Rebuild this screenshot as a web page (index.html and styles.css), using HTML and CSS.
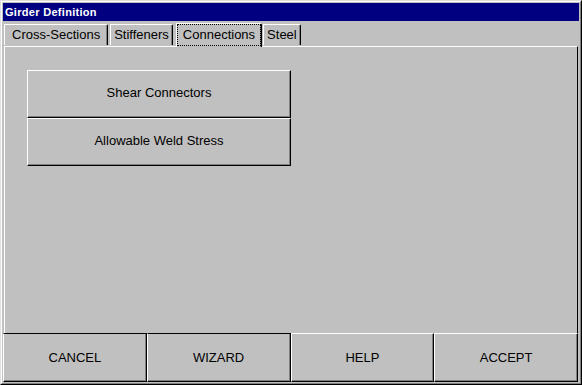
FILE: index.html
```html
<!DOCTYPE html>
<html>
<head>
<meta charset="utf-8">
<link rel="stylesheet" href="styles.css">
</head>
<body>
<div class="window">
  <div class="window-inner">
    <div class="titlebar">Girder Definition</div>
    <div class="tabs">
      <div class="tab tab-first">Cross-Sections</div>
      <div class="tab tab-narrow">Stiffeners</div>
      <div class="tab tab-active"><span class="focus">Connections</span></div>
      <div class="tab tab-narrow">Steel</div>
    </div>
    <div class="panel">
      <div class="stack">
        <div class="btn">Shear Connectors</div>
        <div class="btn">Allowable Weld Stress</div>
      </div>
    </div>
    <div class="footer">
      <div class="fbtn fbtn-dark">CANCEL</div>
      <div class="fbtn fbtn-dark">WIZARD</div>
      <div class="fbtn">HELP</div>
      <div class="fbtn">ACCEPT</div>
    </div>
  </div>
</div>
</body>
</html>
```
FILE: styles.css
```css
html, body {
  margin: 0;
  padding: 0;
  background: #c0c0c0;
}
body {
  font-family: "Liberation Sans", Arial, sans-serif;
  font-size: 13px;
  color: #000;
}
.window {
  width: 582px;
  height: 385px;
  box-sizing: border-box;
  border: 1px solid;
  border-color: #dfdfdf #000 #000 #dfdfdf;
  background: #c0c0c0;
}
.window-inner {
  height: 100%;
  box-sizing: border-box;
  border: 1px solid;
  border-color: #fff #808080 #808080 #fff;
  padding: 1px;
  display: flex;
  flex-direction: column;
}
.titlebar {
  height: 18px;
  line-height: 18px;
  background: #000080;
  color: #fff;
  font-weight: bold;
  font-size: 11px;
  letter-spacing: 0.3px;
  padding-left: 2px;
  flex: none;
}
.tabs {
  height: 25px;
  flex: none;
  display: flex;
  align-items: flex-end;
  gap: 2px;
  position: relative;
  z-index: 1;
}
.tab {
  height: 21px;
  line-height: 19px;
  box-sizing: border-box;
  border-top: 1px solid #fff;
  border-left: 1px solid #fff;
  border-right: 1px solid #000;
  box-shadow: inset -1px 0 #808080;
  border-top-right-radius: 2px;
  padding: 0 6px;
  margin-bottom: 1px;
}
.tab-first {
  margin-left: 1px;
  padding: 0 7px;
}
.tab-narrow {
  padding: 0 3px;
}
.tab-active {
  height: 24px;
  margin-bottom: -1px;
  margin-left: 1px;
  margin-right: -1px;
  background: #c0c0c0;
  padding: 1px 1px 2px 1px;
  line-height: 19px;
}
.focus {
  display: block;
  outline: 1px dotted #000;
  padding: 0 5px;
  height: 20px;
}
.panel {
  flex: 1;
  margin: 0 1px;
  border-top: 1px solid #fff;
  border-left: 1px solid #fff;
  border-right: 1px solid #000;
  padding: 23px 0 0 22px;
}
.stack {
  width: 264px;
  display: flex;
  flex-direction: column;
}
.btn {
  height: 48px;
  box-sizing: border-box;
  border: 1px solid;
  border-color: #fff #000 #000 #fff;
  box-shadow: inset -1px -1px #808080;
  display: flex;
  align-items: center;
  justify-content: center;
  padding-bottom: 3px;
}
.footer {
  height: 49px;
  flex: none;
  display: flex;
  margin-right: 1px;
}
.fbtn {
  flex: 1;
  box-sizing: border-box;
  border: 1px solid;
  border-color: #fff #000 #000 #fff;
  box-shadow: inset -1px -1px #808080;
  display: flex;
  align-items: center;
  justify-content: center;
}
.fbtn-dark {
  border-top-color: #000;
}
```
